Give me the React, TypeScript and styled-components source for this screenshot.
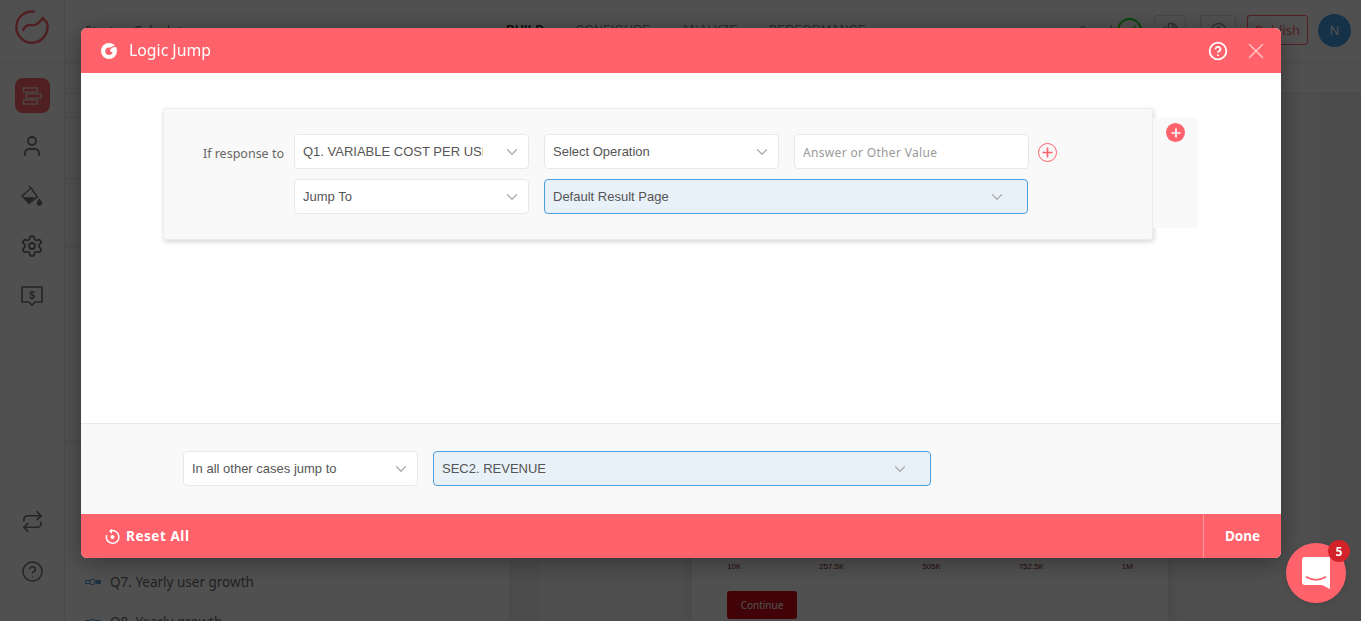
import React from "react";
import styled, { createGlobalStyle } from "styled-components";
import { ChevronDown, CircleHelp, Files, Repeat, Settings, User, X, Check } from "lucide-react";

const coral = "#ff626a";
const ui = `"Noto Sans", "Open Sans", sans-serif`;
const field = `"Liberation Sans", Arial, sans-serif`;

const Global = createGlobalStyle`
  html, body { margin: 0; padding: 0; height: 100%; overflow: hidden; background: #fff; }
  * { box-sizing: border-box; }
  body { font-family: ${ui}; }
`;

const Page = styled.div`
  width: 1361px; height: 621px; display: flex; flex-direction: column; overflow: hidden; background: #fff;
`;
const TopBar = styled.header`
  height: 63px; flex: none; display: flex; align-items: center; border-bottom: 1px solid #e8e8e8;
`;
const LogoCell = styled.div`
  width: 65px; height: 100%; flex: none; display: flex; align-items: center; justify-content: center; padding-bottom: 8px;
  border-right: 1px solid #e8e8e8; color: ${coral};
`;
const Title = styled.div`
  width: 441px; padding-left: 20px; font-size: 13px; color: #666; margin-top: -3px;
`;
const Tabs = styled.nav`
  display: flex; gap: 31px; margin-top: -3px;
`;
const Tab = styled.span<{ $active?: boolean }>`
  font: ${(p) => (p.$active ? 700 : 400)} 12px ${field}; letter-spacing: .35px; color: ${(p) => (p.$active ? "#333" : "#888")};
`;
const TopActions = styled.div`
  margin-left: auto; display: flex; align-items: center; padding: 0 10px 2px 0;
`;
const Saved = styled.span`
  font-size: 12px; color: #999; margin-right: 4px;
`;
const Status = styled.span`
  width: 25px; height: 25px; border: 2px solid #20e020; border-radius: 50%; display: flex; align-items: center; justify-content: center; color: #20e020;
`;
const IconBox = styled.span<{ $w: number; $ml: number }>`
  width: ${(p) => p.$w}px; margin-left: ${(p) => p.$ml}px; height: 30px; border: 1px solid #ddd; border-radius: 3px; display: flex; align-items: center; justify-content: center; color: #999;
`;
const PublishBtn = styled.span`
  width: 61px; height: 30px; margin-left: 11px; border: 1px solid ${coral}; border-radius: 3px; color: ${coral}; font-size: 13px; display: flex; align-items: center; justify-content: center;
`;
const Avatar = styled.span`
  width: 33px; height: 33px; margin-left: 10px; border-radius: 50%; background: #45a0e8; color: #fff; font-size: 13px; display: flex; align-items: center; justify-content: center;
`;

const Body = styled.div`
  flex: 1; display: flex; min-height: 0;
`;
const Rail = styled.aside`
  width: 65px; flex: none; border-right: 1px solid #e8e8e8; display: flex; flex-direction: column; align-items: center; padding: 15px 0 25px; color: #747474;
`;
const RailTile = styled.span`
  width: 35px; height: 35px; border-radius: 8px; background: ${coral}; display: flex; align-items: center; justify-content: center; margin-bottom: 8px;
`;
const RailIcon = styled.span`
  height: 50px; display: flex; align-items: center; justify-content: center;
`;
const RailSpacer = styled.div`
  flex: 1;
`;
const Main = styled.main`
  flex: 1; display: flex; flex-direction: column; min-width: 0;
`;
const SubBar = styled.div`
  height: 31px; flex: none; border-bottom: 1px solid #e8e8e8;
`;
const Workspace = styled.div`
  flex: 1; display: flex; min-height: 0;
`;
const List = styled.section`
  width: 445px; flex: none; display: flex; flex-direction: column; overflow: hidden; border-right: 1px solid #f0f0f0;
`;
const ListHead = styled.div<{ $h: number }>`
  height: ${(p) => p.$h}px; flex: none; border-bottom: 1px solid #e8e8e8;
`;
const ListItem = styled.div`
  height: 40px; flex: none; display: flex; align-items: center; gap: 9px; padding-left: 20px; font-size: 13.5px; color: #6c6c6c;
`;
const Gutter = styled.div<{ $w: number }>`
  width: ${(p) => p.$w}px; flex: none; background-color: #f1f1f1;
  background-image: radial-gradient(#e2e2e2 .6px, transparent .7px); background-size: 4px 4px;
`;
const Stage = styled.section`
  flex: 1; display: flex; justify-content: center; background: #f7f7f7;
`;
const PreviewCard = styled.div`
  width: 476px; height: 100%; background: #fff; box-shadow: 0 0 14px rgba(0,0,0,.12); padding: 468px 35px 0; display: flex; flex-direction: column;
`;
const Scale = styled.div`
  display: flex; justify-content: space-between; font: 8px ${field}; color: #701c24;
`;
const Continue = styled.span`
  margin-top: 20px; width: 70px; height: 28px; flex: none; border-radius: 3px; background: #d00c18; color: #fff; font: 10px ${ui}; display: flex; align-items: center; justify-content: center;
`;

const Overlay = styled.div`
  position: fixed; inset: 0; background: rgba(0,0,0,.685); padding: 28px 0 0 81px;
`;
const Modal = styled.div`
  width: 1200px; height: 530px; display: flex; flex-direction: column; border-radius: 6px; overflow: hidden; background: #fff;
  box-shadow: 0 4px 24px rgba(0,0,0,.35);
`;
const ModalHeader = styled.div`
  height: 45px; flex: none; background: ${coral}; color: #fff; display: flex; align-items: center; padding: 0 12px 0 20px;
`;
const ModalTitle = styled.h2`
  margin: -2px 0 0 12px; font: 400 15.8px ${ui}; color: #fff; flex: 1;
`;
const HeaderBtn = styled.span<{ $dim?: boolean }>`
  display: flex; align-items: center; justify-content: center; margin-left: ${(p) => (p.$dim ? 15 : 0)}px; opacity: ${(p) => (p.$dim ? 0.6 : 1)};
`;
const ModalBody = styled.div`
  flex: 1; padding: 35px 0 0 82px; display: flex; align-items: flex-start; background: #fff;
`;
const RuleCard = styled.div`
  width: 990px; height: 132px; flex: none; background: #f9f9f9; border: 1px solid #ececec; border-radius: 3px;
  box-shadow: 1px 2px 5px rgba(0,0,0,.16); padding: 25px 0 0 0; display: flex; flex-direction: column; gap: 10px;
`;
const SideTab = styled.div`
  width: 45px; height: 110px; margin-top: 10px; flex: none; background: #f9f9f9; border-radius: 0 3px 3px 0; display: flex; justify-content: center; padding-top: 5px;
`;
const RuleRow = styled.div<{ $indent?: boolean }>`
  display: flex; align-items: center; gap: 15px; padding-left: ${(p) => (p.$indent ? 130 : 0)}px;
`;
const RuleLabel = styled.label`
  width: 120px; margin-right: -5px; text-align: right; font: 12.5px ${ui}; color: #666; padding-top: 4px;
`;
const Select = styled.div<{ $w: number; $on?: boolean }>`
  width: ${(p) => p.$w}px; height: 35px; flex: none; border-radius: 4px; display: flex; align-items: center; padding: 0 ${(p) => (p.$on ? 21 : 7)}px 0 8px;
  border: 1px solid ${(p) => (p.$on ? "#4f9fdc" : "#e8e8e8")}; background: ${(p) => (p.$on ? "#e8f0f8" : "#fff")};
  font: 13px ${field}; color: #555;
`;
const SelectText = styled.span<{ $w?: number }>`
  flex: ${(p) => (p.$w ? "none" : 1)}; width: ${(p) => (p.$w ? `${p.$w}px` : "auto")}; white-space: nowrap; overflow: hidden; margin-right: auto;
`;
const Chevron = styled(ChevronDown)`
  flex: none; color: #aaa;
`;
const TextField = styled.input`
  width: 235px; height: 35px; flex: none; border-radius: 4px; border: 1px solid #e8e8e8; background: #fff; padding: 2px 8px 0; outline: none;
  font: 12px ${ui}; letter-spacing: .33px; color: #555;
  &::placeholder { color: #999; opacity: 1; }
`;
const AddOutline = styled.span`
  width: 19px; height: 19px; margin: 1px 0 0 -6px; border: 1px solid ${coral}; border-radius: 50%; color: ${coral}; display: flex; align-items: center; justify-content: center;
`;
const AddSolid = styled.span`
  width: 19px; height: 19px; border-radius: 50%; background: ${coral}; color: #fff; display: flex; align-items: center; justify-content: center;
`;
const DefaultBar = styled.div`
  height: 91px; flex: none; background: #f9f9f9; border-top: 1px solid #e8e8e8; padding: 27px 0 0 102px; display: flex; gap: 15px; align-items: flex-start;
`;
const ActionBar = styled.div`
  height: 44px; flex: none; background: ${coral}; color: #fff; display: flex; align-items: stretch; justify-content: space-between;
`;
const ResetBtn = styled.button`
  border: 0; background: none; color: #fff; font: 700 13.5px ${ui}; letter-spacing: .55px; display: flex; align-items: center; gap: 5px; padding: 0 0 0 23px; cursor: pointer;
`;
const DoneBtn = styled.button`
  width: 78px; border: 0; border-left: 1px solid rgba(255,255,255,.35); background: none; color: #fff; font: 700 13.5px ${ui}; padding: 0; cursor: pointer;
`;
const Chat = styled.div`
  position: fixed; left: 1286px; top: 543px; width: 60px; height: 60px; border-radius: 50%; background: ${coral}; display: flex; align-items: center; justify-content: center;
  box-shadow: 0 1px 6px rgba(0,0,0,.1);
`;
const Badge = styled.span`
  position: absolute; left: 42px; top: -3px; width: 22px; height: 22px; border-radius: 50%; background: #d2232a; color: #fff; font: 700 12px ${ui}; display: flex; align-items: center; justify-content: center;
`;

const Plus = ({ size = 11, w = 1.8 }: { size?: number; w?: number }) => (
  <svg width={size} height={size} viewBox="0 0 12 12" fill="none" stroke="currentColor" strokeWidth={w}><path d="M6 0.5v11M0.5 6h11" /></svg>
);
const Logo = () => (
  <svg width="36" height="36" viewBox="0 0 36 36" fill="none" stroke="currentColor" strokeWidth="2.4" strokeLinecap="round">
    <path d="M20 2.6A15.6 15.6 0 1 0 33 14" />
    <path d="M9 21c2-4 4-5 7-5 3 0 4 1 7-1 3-2 4-4 6-6 1 2 3 3 4 5" />
  </svg>
);
const TileIcon = () => (
  <svg width="20" height="20" viewBox="0 0 20 20" fill="none" stroke="#fff" strokeOpacity=".75" strokeWidth="1.4">
    <rect x="1.5" y="2" width="14" height="4" /><rect x="4" y="8" width="15" height="4" /><rect x="1.5" y="14" width="14" height="4" />
  </svg>
);
const Bucket = () => (
  <svg width="22" height="22" viewBox="0 0 22 22" fill="none" stroke="currentColor" strokeWidth="1.4" strokeLinejoin="round">
    <path d="M1 11l9-8 6.5 9L8 18.5z" />
    <path d="M2.5 12.2h12.6L8 18z" fill="currentColor" stroke="none" />
    <path d="M10 3L7.5 1" />
    <path d="M18.5 13c-1.5 2.5-2.7 3.5-2.7 5a2.7 2.7 0 0 0 5.4 0c0-1.5-1.2-2.5-2.7-5z" fill="currentColor" stroke="none" />
  </svg>
);
const Billing = () => (
  <svg width="22" height="21" viewBox="0 0 22 21" fill="none" stroke="currentColor" strokeWidth="1.6">
    <path d="M1 1h20v15h-7l-3 3-3-3H1z" />
    <text x="11" y="13" textAnchor="middle" fontSize="10" fontWeight="700" fill="currentColor" stroke="none" fontFamily="Liberation Sans">$</text>
  </svg>
);
const BrandC = () => (
  <svg width="16" height="16" viewBox="0 0 16 16">
    <circle cx="8" cy="8" r="8" fill="#fff" />
    <circle cx="8" cy="8.2" r="3.7" fill={coral} />
    <path d="M9 5.2L15.6 3.6 14.4 2.2 9 4.4z" fill={coral} />
    <circle cx="11.2" cy="7.2" r="2" fill="#fff" />
  </svg>
);
const ResetIcon = () => (
  <svg width="17" height="17" viewBox="0 0 17 17" fill="none" stroke="#fff" strokeWidth="1.5">
    <path d="M6 3.2A6.3 6.3 0 1 1 2.6 7" />
    <path d="M8 0.8L5 3.3l3 2.4z" fill="#fff" stroke="none" />
    <circle cx="8.5" cy="9" r="2" fill="#fff" stroke="none" />
  </svg>
);
const ChainIcon = () => (
  <svg width="16" height="8" viewBox="0 0 16 8" fill="none" stroke="#5b9bd0" strokeWidth="1">
    <path d="M0.5 2.5h4v3h-4z M9.5 4h2" /><circle cx="7.5" cy="4" r="2.8" /><path d="M11 2.5h4.5v3H11z" fill="#5b9bd0" />
  </svg>
);
const ChatIcon = () => (
  <svg width="28" height="32" viewBox="0 0 28 32">
    <path d="M3 0h25v32l-8-4H3a3 3 0 0 1-3-3V3a3 3 0 0 1 3-3z" fill="#fff" />
    <path d="M4.5 20c6 3.6 13 3.6 19 0" fill="none" stroke={coral} strokeWidth="1.6" strokeLinecap="round" />
  </svg>
);

const questions = ["Q1. Variable cost per user", "Q2. Fixed monthly cost", "Q3. Number of users", "Q4. Price per user", "Q5. Churn rate", "Q6. Marketing spend", "Q7. Yearly user growth", "Q8. Yearly growth"];

export default function App() {
  return (
    <Page>
      <Global />
      <TopBar>
        <LogoCell><Logo /></LogoCell>
        <Title>Startup Calculator</Title>
        <Tabs>
          <Tab $active>BUILD</Tab>
          <Tab>CONFIGURE</Tab>
          <Tab>ANALYZE</Tab>
          <Tab>PERFORMANCE</Tab>
        </Tabs>
        <TopActions>
          <Saved>Saved</Saved>
          <Status><Check size={17} /></Status>
          <IconBox $w={32} $ml={12}><Files size={17} /></IconBox>
          <IconBox $w={36} $ml={14}><CircleHelp size={17} /></IconBox>
          <PublishBtn>Publish</PublishBtn>
          <Avatar>N</Avatar>
        </TopActions>
      </TopBar>
      <Body>
        <Rail>
          <RailTile><TileIcon /></RailTile>
          <RailIcon><User size={24} strokeWidth={1.8} /></RailIcon>
          <RailIcon><Bucket /></RailIcon>
          <RailIcon><Settings size={24} strokeWidth={1.8} /></RailIcon>
          <RailIcon><Billing /></RailIcon>
          <RailSpacer />
          <RailIcon><Repeat size={23} strokeWidth={1.8} /></RailIcon>
          <RailIcon><CircleHelp size={23} strokeWidth={1.6} /></RailIcon>
        </Rail>
        <Main>
          <SubBar />
          <Workspace>
            <List>
              <ListHead $h={24} />
              <ListHead $h={61} />
              <ListHead $h={68} />
              {questions.slice(0, 3).map((q) => <ListItem key={q}><ChainIcon />{q}</ListItem>)}
              <ListHead $h={75} />
              {questions.slice(3).map((q) => <ListItem key={q}><ChainIcon />{q}</ListItem>)}
            </List>
            <Gutter $w={30} />
            <Stage>
              <PreviewCard>
                <Scale><span>10K</span><span>257.5K</span><span>505K</span><span>752.5K</span><span>1M</span></Scale>
                <Continue>Continue</Continue>
              </PreviewCard>
            </Stage>
            <Gutter $w={41} />
          </Workspace>
        </Main>
      </Body>
      <Overlay>
        <Modal>
          <ModalHeader>
            <BrandC />
            <ModalTitle>Logic Jump</ModalTitle>
            <HeaderBtn><CircleHelp size={20} strokeWidth={2.2} /></HeaderBtn>
            <HeaderBtn $dim><X size={26} strokeWidth={1.5} /></HeaderBtn>
          </ModalHeader>
          <ModalBody>
            <RuleCard>
              <RuleRow>
                <RuleLabel>If response to</RuleLabel>
                <Select $w={235}><SelectText $w={180}>Q1. VARIABLE COST PER USER</SelectText><Chevron size={18} strokeWidth={1.6} /></Select>
                <Select $w={235}><SelectText>Select Operation</SelectText><Chevron size={18} strokeWidth={1.6} /></Select>
                <TextField placeholder="Answer or Other Value" readOnly />
                <AddOutline><Plus /></AddOutline>
              </RuleRow>
              <RuleRow $indent>
                <Select $w={235}><SelectText>Jump To</SelectText><Chevron size={18} strokeWidth={1.6} /></Select>
                <Select $w={484} $on><SelectText>Default Result Page</SelectText><Chevron size={18} strokeWidth={1.6} /></Select>
              </RuleRow>
            </RuleCard>
            <SideTab><AddSolid><Plus size={10} w={2} /></AddSolid></SideTab>
          </ModalBody>
          <DefaultBar>
            <Select $w={235}><SelectText>In all other cases jump to</SelectText><Chevron size={18} strokeWidth={1.6} /></Select>
            <Select $w={498} $on><SelectText>SEC2. REVENUE</SelectText><Chevron size={18} strokeWidth={1.6} /></Select>
          </DefaultBar>
          <ActionBar>
            <ResetBtn><ResetIcon />Reset All</ResetBtn>
            <DoneBtn>Done</DoneBtn>
          </ActionBar>
        </Modal>
      </Overlay>
      <Chat>
        <ChatIcon />
        <Badge>5</Badge>
      </Chat>
    </Page>
  );
}
